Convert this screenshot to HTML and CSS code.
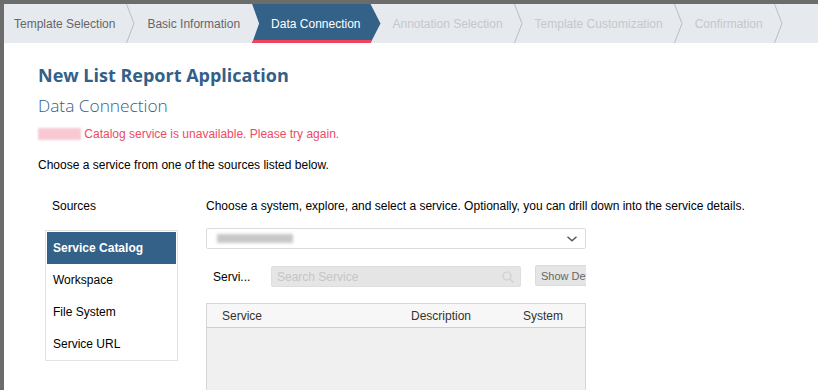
FILE: index.html
```html
<!DOCTYPE html>
<html lang="en">
<head>
    <meta charset="UTF-8">
    <title>New List Report Application</title>
    <link rel="stylesheet" href="styles.css">
</head>
<body>
    <div class="dialog">
        <ul class="wizard">
            <li class="step done first">
                <span>Template Selection</span>
                <svg class="sep" width="9" height="39" viewBox="0 0 9 39"><polyline points="0.5,0 8,19.5 0.5,39" fill="none" stroke="#b9bdc1" stroke-width="1"/></svg>
            </li>
            <li class="step done">
                <span>Basic Information</span>
            </li>
            <li class="step active">
                <span>Data Connection</span>
            </li>
            <li class="step todo">
                <span>Annotation Selection</span>
                <svg class="sep" width="9" height="39" viewBox="0 0 9 39"><polyline points="0.5,0 8,19.5 0.5,39" fill="none" stroke="#b9bdc1" stroke-width="1"/></svg>
            </li>
            <li class="step todo">
                <span>Template Customization</span>
                <svg class="sep" width="9" height="39" viewBox="0 0 9 39"><polyline points="0.5,0 8,19.5 0.5,39" fill="none" stroke="#b9bdc1" stroke-width="1"/></svg>
            </li>
            <li class="step todo">
                <span>Confirmation</span>
                <svg class="sep" width="9" height="39" viewBox="0 0 9 39"><polyline points="0.5,0 8,19.5 0.5,39" fill="none" stroke="#b9bdc1" stroke-width="1"/></svg>
            </li>
        </ul>

        <div class="content">
            <h1>New List Report Application</h1>
            <h2>Data Connection</h2>
            <p class="error"><span class="blur-pink"></span> Catalog service is unavailable. Please try again.</p>
            <p class="intro">Choose a service from one of the sources listed below.</p>

            <div class="columns">
                <div class="sources">
                    <div class="label">Sources</div>
                    <ul class="source-list">
                        <li class="selected">Service Catalog</li>
                        <li>Workspace</li>
                        <li>File System</li>
                        <li>Service URL</li>
                    </ul>
                </div>

                <div class="catalog">
                    <div class="label">Choose a system, explore, and select a service. Optionally, you can drill down into the service details.</div>
                    <div class="select">
                        <span class="blur-gray"></span>
                        <svg width="10" height="6" viewBox="0 0 10 6"><polyline points="0.5,0.8 5,4.8 9.5,0.8" fill="none" stroke="#555" stroke-width="1.4"/></svg>
                    </div>
                    <div class="search-row">
                        <span class="search-label">Servi...</span>
                        <div class="search">
                            <span>Search Service</span>
                            <svg width="12" height="12" viewBox="0 0 12 12"><circle cx="5" cy="5" r="4" fill="none" stroke="#cfcfcf" stroke-width="1.2"/><line x1="8" y1="8" x2="11.5" y2="11.5" stroke="#cfcfcf" stroke-width="1.3"/></svg>
                        </div>
                        <button class="details">Show Details</button>
                    </div>
                    <div class="table">
                        <div class="thead">
                            <span class="col-service">Service</span>
                            <span class="col-desc">Description</span>
                            <span class="col-system">System</span>
                        </div>
                        <div class="tbody"></div>
                    </div>
                </div>
            </div>
        </div>
    </div>
</body>
</html>
```

FILE: styles.css
```css
* {
    margin: 0;
    padding: 0;
    box-sizing: border-box;
}

body {
    background-color: #6c6c6c;
    font-family: "Liberation Sans", Arial, sans-serif;
    font-size: 12px;
    color: #000;
    padding: 4px 0 0 4px;
    height: 390px;
    overflow: hidden;
}

.dialog {
    background-color: white;
    height: 386px;
    overflow: hidden;
}

/* wizard steps */
.wizard {
    list-style: none;
    display: flex;
    height: 39px;
    background-color: #e6eaee;
}

.step {
    display: flex;
    align-items: center;
    height: 39px;
    padding-left: 12px;
    white-space: nowrap;
}

.step.first {
    padding-left: 10px;
}

.step .sep {
    margin-left: 11px;
    display: block;
}

.step.done {
    color: #666;
}

.step.done:nth-child(2) {
    padding-right: 12px;
}

.step.todo {
    color: #c4c8cc;
}

.step.active {
    position: relative;
    background-color: #346187;
    color: white;
    padding: 0 20px 0 19px;
    clip-path: polygon(0 0, calc(100% - 10px) 0, 100% 50%, calc(100% - 10px) 100%, 0 100%, 7px 50%);
}

.step.active::after {
    content: "";
    position: absolute;
    left: 0;
    right: 9px;
    bottom: 0;
    height: 3px;
    background-color: #f0435c;
}

/* content */
.content {
    padding: 20px 0 0 34px;
}

h1 {
    font-family: "Open Sans", sans-serif;
    font-size: 18px;
    font-weight: 700;
    color: #32608a;
    line-height: 24px;
}

h2 {
    font-family: "Open Sans", sans-serif;
    font-size: 17.3px;
    font-weight: 300;
    color: #346187;
    line-height: 24px;
    margin-top: 7px;
}

.error {
    color: #ee4a63;
    line-height: 16px;
    margin-top: 8px;
}

.blur-pink {
    display: inline-block;
    width: 43px;
    height: 12px;
    vertical-align: -2px;
    background-color: #f8c9d2;
    filter: blur(1px);
}

.intro {
    line-height: 16px;
    margin-top: 15px;
}

.columns {
    display: flex;
    margin-top: 25px;
}

.label {
    line-height: 16px;
    white-space: nowrap;
}

.sources {
    width: 168px;
    padding-left: 7px;
}

.sources .label {
    padding-left: 7px;
}

.source-list {
    list-style: none;
    width: 133px;
    margin-top: 16px;
    border: 1px solid #e3e3e3;
    padding: 1px 1px 0 1px;
}

.source-list li {
    height: 32px;
    line-height: 32px;
    padding-left: 6px;
}

.source-list li.selected {
    background-color: #346187;
    color: white;
    font-weight: bold;
}

.catalog {
    width: 380px;
}

.select {
    margin-top: 14px;
    height: 21px;
    border: 1px solid #dcdcdc;
    border-radius: 2px;
    display: flex;
    align-items: center;
    justify-content: space-between;
    padding: 0 8px 0 10px;
}

.blur-gray {
    display: block;
    width: 76px;
    height: 9px;
    background-color: #c8c8c8;
    filter: blur(1.5px);
}

.search-row {
    display: flex;
    align-items: center;
    margin-top: 16px;
    height: 23px;
    overflow: hidden;
}

.search-label {
    flex: none;
    width: 65px;
    padding-left: 7px;
}

.search {
    flex: none;
    width: 250px;
    height: 21px;
    background-color: #e5e5e5;
    border: 1px solid #dedede;
    border-radius: 2px;
    display: flex;
    align-items: center;
    justify-content: space-between;
    padding: 0 6px 0 5px;
    color: #c6c6c6;
}

.details {
    flex: none;
    margin-left: 14px;
    height: 21px;
    margin-top: -2px;
    padding: 0 5px;
    background-color: #e5e5e5;
    border: 1px solid #dadada;
    border-radius: 2px;
    color: #666;
    font-family: "Liberation Sans", Arial, sans-serif;
    font-size: 11px;
    white-space: nowrap;
}

.table {
    margin-top: 15px;
    border: 1px solid #d6d6d6;
    height: 120px;
}

.thead {
    display: flex;
    height: 24px;
    align-items: center;
    background-color: #f7f7f7;
    border-bottom: 1px solid #cfcfcf;
    color: #333;
}

.col-service {
    padding-left: 15px;
    width: 204px;
}

.col-desc {
    width: 112px;
}

.tbody {
    background-color: #f0f0f0;
    height: 100%;
}
```
